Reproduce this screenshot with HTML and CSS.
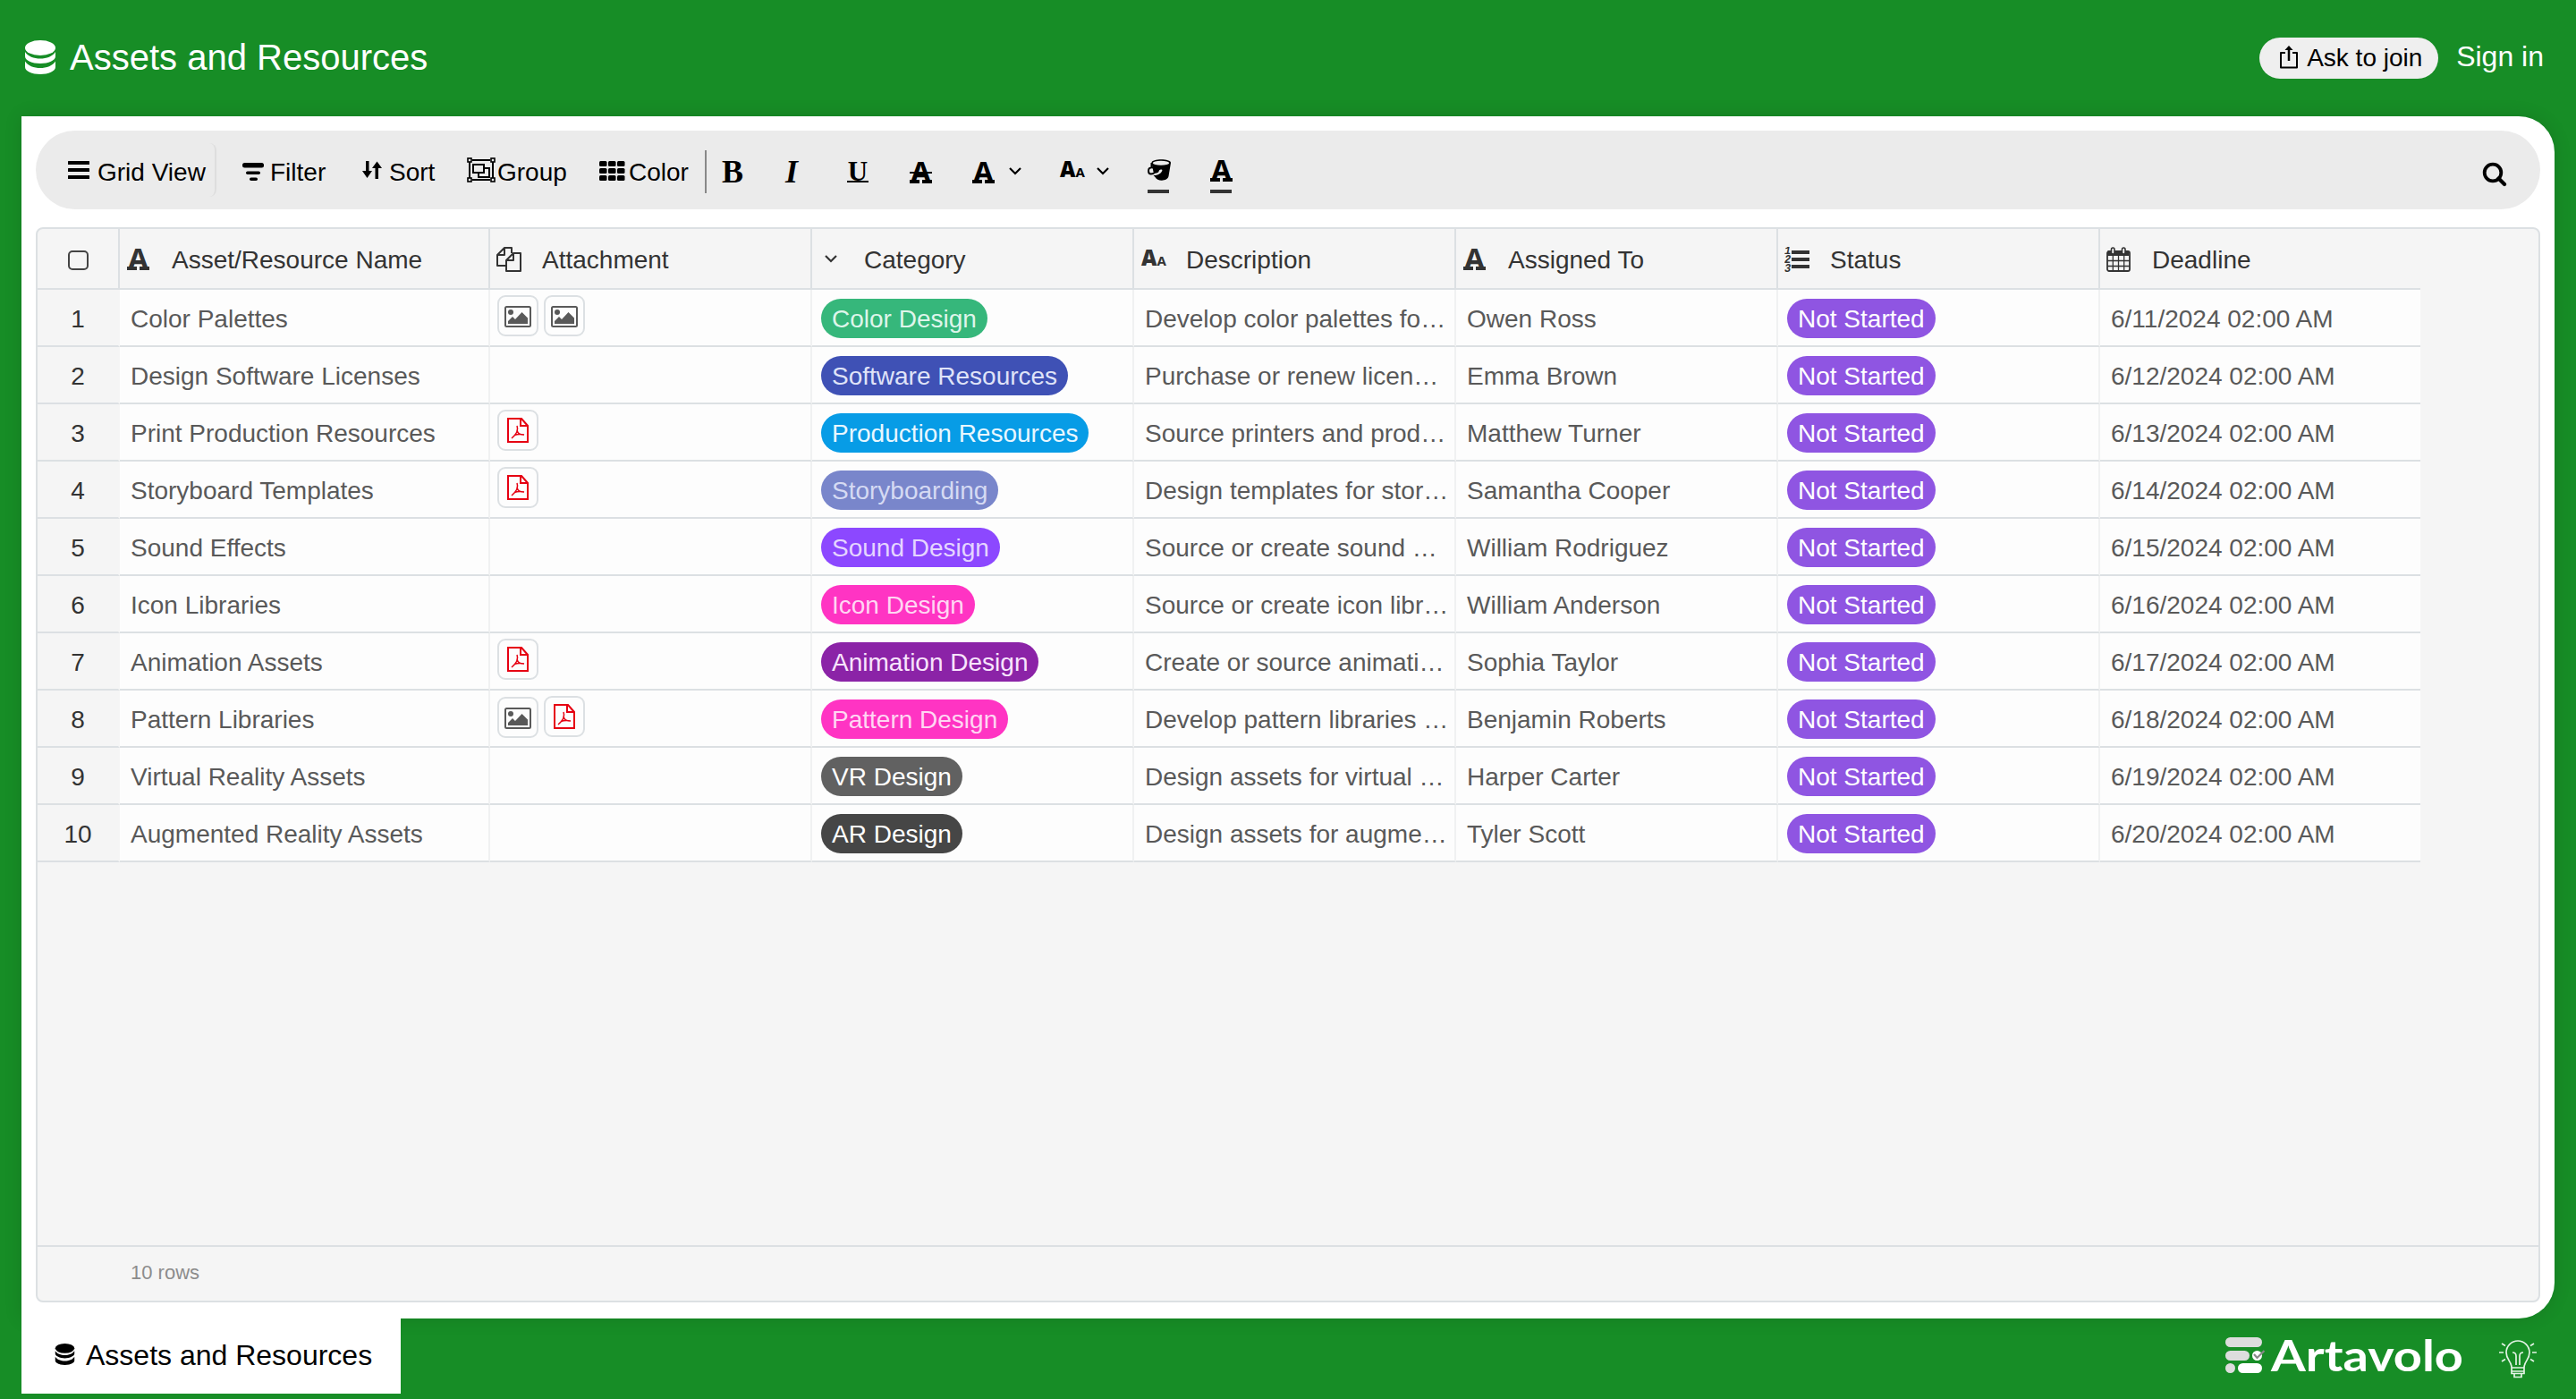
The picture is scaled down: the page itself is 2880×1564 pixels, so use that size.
FILE: index.html
```html
<!DOCTYPE html>
<html lang="en">
<head>
    <meta charset="UTF-8">
    <meta name="viewport" content="width=device-width, initial-scale=1.0">
    <title>Assets and Resources</title>
    <link rel="stylesheet" href="styles.css">
</head>
<body>

    <!-- shared icons -->
    <svg class="icon-defs" width="0" height="0">
        <symbol id="i-database" viewBox="0 0 34 38">
            <ellipse cx="17" cy="8.5" rx="17" ry="8.5"/>
            <path d="M0 13c3 5 10 7.500 17 7.500s14-2.500 17-7.500v5c0 4.500-8 8-17 8s-17-3.500-17-8z"/>
            <path d="M0 23.500c3 5 10 7.500 17 7.500s14-2.500 17-7.500v6.500c0 4.500-8 8-17 8s-17-3.500-17-8z"/>
        </symbol>
        <symbol id="i-chevron" viewBox="0 0 14 9">
            <path d="M1 1l6 6 6-6" fill="none" stroke="currentColor" stroke-width="2.2"/>
        </symbol>
        <symbol id="i-image" viewBox="0 0 30 24">
            <rect x="1" y="1" width="28" height="22" rx="1.500" fill="none" stroke="currentColor" stroke-width="2"/>
            <circle cx="7" cy="7" r="3"/>
            <path d="M4 20v-3l5-5 3 3 7.500-8 6.500 6.500v6.500z"/>
        </symbol>
        <symbol id="i-pdf" viewBox="0 0 24 28">
            <path d="M1 1h15l7 8v18h-22z M15 1v8h8" fill="none" stroke="currentColor" stroke-width="2"/>
            <path d="M11 9c2 5 0 9-6 14M11 14c1 4 3 5 8 5M8 19.500c4-1.500 7-1.500 11-.5" fill="none" stroke="currentColor" stroke-width="1.500"/>
        </symbol>
    </svg>

    <header class="header">
        <div class="title">
            <svg class="title-icon"><use href="#i-database"/></svg>
            <span>Assets and Resources</span>
        </div>
        <div class="header-actions">
            <button class="join">
                <svg width="20" height="26" viewBox="0 0 20 26">
                    <path d="M6 8h-5v16.500h18v-16.500h-5" fill="none" stroke="#000" stroke-width="2" stroke-linejoin="round"/>
                    <path d="M10 17v-13" stroke="#000" stroke-width="2.500"/>
                    <path d="M5.500 5l4.500-5 4.500 5z"/>
                </svg>
                <span>Ask to join</span>
            </button>
            <a class="signin">Sign in</a>
        </div>
    </header>

    <main class="panel">
        <div class="toolbar">
            <div class="tool view">
                <svg width="24" height="20" viewBox="0 0 24 20">
                    <rect width="24" height="4" rx=".5"/><rect y="8" width="24" height="4" rx=".5"/><rect y="16" width="24" height="4" rx=".5"/>
                </svg>
                <span>Grid View</span>
            </div>
            <div class="tool filter">
                <svg width="24" height="20" viewBox="0 0 24 20">
                    <rect width="24" height="5.500" rx="2.500"/><rect x="4" y="9.500" width="16" height="3.500" rx="1.700"/><rect x="8" y="16.500" width="9" height="3.500" rx="1.700"/>
                </svg>
                <span>Filter</span>
            </div>
            <div class="tool sort">
                <svg width="22" height="20" viewBox="0 0 22 20">
                    <path d="M4 0h3.500v11h3.500l-5.500 8-5.500-8h4z M14.500 20h3.500v-12h4l-5.500-7.500-5.500 7.500h3.500z"/>
                </svg>
                <span>Sort</span>
            </div>
            <div class="tool group">
                <svg width="32" height="28" viewBox="0 0 32 28" fill="none" stroke="#000" stroke-width="2">
                    <path d="M6 3h20M6 25h20M3 5v18M29 5v18M7 8h12v9h-12z M20 12h5v10h-12v-4"/>
                    <g stroke-width="1.600">
                        <rect x="1" y="1" width="4" height="4"/><rect x="27" y="1" width="4" height="4"/>
                        <rect x="1" y="23" width="4" height="4"/><rect x="27" y="23" width="4" height="4"/>
                    </g>
                </svg>
                <span>Group</span>
            </div>
            <div class="tool color">
                <svg width="29" height="22" viewBox="0 0 29 22">
                    <rect width="8.500" height="6" rx="1.500"/><rect x="10" width="8.500" height="6" rx="1.500"/><rect x="20" width="8.500" height="6" rx="1.500"/>
                    <rect y="8" width="8.500" height="6" rx="1.500"/><rect x="10" y="8" width="8.500" height="6" rx="1.500"/><rect x="20" y="8" width="8.500" height="6" rx="1.500"/>
                    <rect y="16" width="8.500" height="6" rx="1.500"/><rect x="10" y="16" width="8.500" height="6" rx="1.500"/><rect x="20" y="16" width="8.500" height="6" rx="1.500"/>
                </svg>
                <span>Color</span>
            </div>
            <div class="separator"></div>
            <div class="formats">
                <span class="fmt bold">B</span>
                <span class="fmt italic">I</span>
                <span class="fmt underline">U</span>
                <span class="fmt letter"><span class="slab strike">A</span></span>
                <span class="fmt letter"><span class="slab">A</span></span>
                <svg class="chevron first"><use href="#i-chevron"/></svg>
                <span class="letters"><b>A</b><small>A</small></span>
                <svg class="chevron second"><use href="#i-chevron"/></svg>
                <span class="fmt swatch">
                    <svg width="26" height="24" viewBox="0 0 26 24">
                        <path d="M4.500 4v5M9 14c-3 3-8 4-8-1 0-3 2-4 5-3.500" fill="none" stroke="#000" stroke-width="2"/>
                        <path d="M4.500 4c0-5 21.500-5 21.500 0l-2.500 15c-1 6-13 6-15 1l-2-2c5 0 9-2 10-6-2-1-4 0-4 2-2 2-5 2-6 0z"/>
                        <ellipse cx="15" cy="4.300" rx="9.200" ry="2.500" fill="#ebebeb"/>
                    </svg>
                </span>
                <span class="fmt swatch"><span class="slab">A</span></span>
            </div>
            <svg class="search" width="28" height="28" viewBox="0 0 28 28" fill="none" stroke="#000">
                <circle cx="12" cy="12" r="9.300" stroke-width="3.800"/>
                <path d="M18.500 18.500l6.500 6.500" stroke-width="4.200" stroke-linecap="round"/>
            </svg>
        </div>

        <section class="grid">
            <table>
                <colgroup>
                    <col class="col-num"><col class="col-name"><col><col><col><col><col><col class="col-last">
                </colgroup>
                <thead>
                    <tr>
                        <th><span class="checkbox"></span></th>
                        <th><div class="head"><i><span class="slab">A</span></i>Asset/Resource Name</div></th>
                        <th><div class="head"><i class="tight">
                            <svg width="28" height="28" viewBox="0 0 28 28" fill="none" stroke="currentColor" stroke-width="2" stroke-linejoin="round">
                                <path d="M11 21h-10v-12l8-8h8v6M1 9h8v-8M11 15v12h16v-20h-8zM11 15h8v-8"/>
                            </svg></i>Attachment</div></th>
                        <th><div class="head"><i class="wide"><svg class="chevron"><use href="#i-chevron"/></svg></i>Category</div></th>
                        <th><div class="head"><i><span class="letters"><b>A</b><small>A</small></span></i>Description</div></th>
                        <th><div class="head"><i><span class="slab">A</span></i>Assigned To</div></th>
                        <th><div class="head"><i class="tight">
                            <svg width="28" height="28" viewBox="0 0 28 28">
                                <g class="list-digits"><text x="0" y="8">1</text><text x="0" y="18">2</text><text x="0" y="28">3</text></g>
                                <rect x="8" y="4" width="20" height="4"/><rect x="8" y="12" width="20" height="4"/><rect x="8" y="20" width="20" height="4"/>
                            </svg></i>Status</div></th>
                        <th><div class="head"><i class="tight">
                            <svg width="27" height="28" viewBox="0 0 27 28">
                                <path d="M1 10v-4q0-2 2-2h20q2 0 2 2v4z"/>
                                <rect x="1" y="5" width="25" height="22" rx="2" fill="none" stroke="currentColor" stroke-width="1.800"/>
                                <path d="M1 15.500h25M1 21.500h25M7.300 10v17M13.500 10v17M19.700 10v17" stroke="currentColor" stroke-width="1.300"/>
                                <rect x="5.500" y="1" width="3.500" height="7" rx="1.700" fill="#f5f5f5" stroke="currentColor" stroke-width="1.600"/>
                                <rect x="17.500" y="1" width="3.500" height="7" rx="1.700" fill="#f5f5f5" stroke="currentColor" stroke-width="1.600"/>
                            </svg></i>Deadline</div></th>
                    </tr>
                </thead>
                <tbody>
                    <tr>
                        <td>1</td><td>Color Palettes</td>
                        <td class="files"><span class="file"><svg class="image"><use href="#i-image"/></svg></span><span class="file"><svg class="image"><use href="#i-image"/></svg></span></td>
                        <td class="tags"><span class="tag green">Color Design</span></td>
                        <td>Develop color palettes fo…</td><td>Owen Ross</td>
                        <td class="tags"><span class="tag status">Not Started</span></td><td>6/11/2024 02:00 AM</td>
                    </tr>
                    <tr>
                        <td>2</td><td>Design Software Licenses</td>
                        <td class="files"></td>
                        <td class="tags"><span class="tag indigo">Software Resources</span></td>
                        <td>Purchase or renew licen…</td><td>Emma Brown</td>
                        <td class="tags"><span class="tag status">Not Started</span></td><td>6/12/2024 02:00 AM</td>
                    </tr>
                    <tr>
                        <td>3</td><td>Print Production Resources</td>
                        <td class="files"><span class="file"><svg class="pdf"><use href="#i-pdf"/></svg></span></td>
                        <td class="tags"><span class="tag blue">Production Resources</span></td>
                        <td>Source printers and prod…</td><td>Matthew Turner</td>
                        <td class="tags"><span class="tag status">Not Started</span></td><td>6/13/2024 02:00 AM</td>
                    </tr>
                    <tr>
                        <td>4</td><td>Storyboard Templates</td>
                        <td class="files"><span class="file"><svg class="pdf"><use href="#i-pdf"/></svg></span></td>
                        <td class="tags"><span class="tag slate">Storyboarding</span></td>
                        <td>Design templates for stor…</td><td>Samantha Cooper</td>
                        <td class="tags"><span class="tag status">Not Started</span></td><td>6/14/2024 02:00 AM</td>
                    </tr>
                    <tr>
                        <td>5</td><td>Sound Effects</td>
                        <td class="files"></td>
                        <td class="tags"><span class="tag violet">Sound Design</span></td>
                        <td>Source or create sound …</td><td>William Rodriguez</td>
                        <td class="tags"><span class="tag status">Not Started</span></td><td>6/15/2024 02:00 AM</td>
                    </tr>
                    <tr>
                        <td>6</td><td>Icon Libraries</td>
                        <td class="files"></td>
                        <td class="tags"><span class="tag pink">Icon Design</span></td>
                        <td>Source or create icon libr…</td><td>William Anderson</td>
                        <td class="tags"><span class="tag status">Not Started</span></td><td>6/16/2024 02:00 AM</td>
                    </tr>
                    <tr>
                        <td>7</td><td>Animation Assets</td>
                        <td class="files"><span class="file"><svg class="pdf"><use href="#i-pdf"/></svg></span></td>
                        <td class="tags"><span class="tag purple">Animation Design</span></td>
                        <td>Create or source animati…</td><td>Sophia Taylor</td>
                        <td class="tags"><span class="tag status">Not Started</span></td><td>6/17/2024 02:00 AM</td>
                    </tr>
                    <tr>
                        <td>8</td><td>Pattern Libraries</td>
                        <td class="files"><span class="file"><svg class="image"><use href="#i-image"/></svg></span><span class="file"><svg class="pdf"><use href="#i-pdf"/></svg></span></td>
                        <td class="tags"><span class="tag pink">Pattern Design</span></td>
                        <td>Develop pattern libraries …</td><td>Benjamin Roberts</td>
                        <td class="tags"><span class="tag status">Not Started</span></td><td>6/18/2024 02:00 AM</td>
                    </tr>
                    <tr>
                        <td>9</td><td>Virtual Reality Assets</td>
                        <td class="files"></td>
                        <td class="tags"><span class="tag gray">VR Design</span></td>
                        <td>Design assets for virtual …</td><td>Harper Carter</td>
                        <td class="tags"><span class="tag status">Not Started</span></td><td>6/19/2024 02:00 AM</td>
                    </tr>
                    <tr>
                        <td>10</td><td>Augmented Reality Assets</td>
                        <td class="files"></td>
                        <td class="tags"><span class="tag dark">AR Design</span></td>
                        <td>Design assets for augme…</td><td>Tyler Scott</td>
                        <td class="tags"><span class="tag status">Not Started</span></td><td>6/20/2024 02:00 AM</td>
                    </tr>
                </tbody>
            </table>
            <div class="row-count">10 rows</div>
        </section>
    </main>

    <footer class="footer">
        <div class="tab">
            <svg class="tab-icon"><use href="#i-database"/></svg>
            <span>Assets and Resources</span>
        </div>
        <div class="brand">
            <svg width="268" height="60" viewBox="0 -6 268 60">
                <g fill="#ddd">
                    <rect y="3" width="41" height="11" rx="5.500"/>
                    <rect y="18" width="27" height="11" rx="5.500"/>
                    <circle cx="5.500" cy="37.500" r="5.500"/>
                </g>
                <g fill="#fff">
                    <circle cx="35.500" cy="23.500" r="5.500"/>
                    <rect x="14" y="32" width="27" height="11" rx="5.500"/>
                </g>
                <path d="M32 22l3.500 4 8-8" fill="none" stroke="#888" stroke-width="2.200"/>
                <text class="brand-name" x="51" y="41" textLength="215" lengthAdjust="spacingAndGlyphs">Artavolo</text>
            </svg>
            <svg class="bulb" width="42" height="43" viewBox="0 0 42 43" fill="none" stroke="#e3f3e5" stroke-width="1.700">
                <path d="M14 31c0-7-6-9-6-17a13 13 0 0 1 26 0c0 8-6 10-6 17zM14 35h14M14 31v6.500h14v-6.500M17 38v3.500h8v-3.500"/>
                <path d="M15 14q4 0 4 4v10M27 14q-4 0-4 4v10M0 14h5M37 14h5M3 4l4 2.500M39 4l-4 2.500M3 24l4-2.500M39 24l-4-2.500"/>
            </svg>
        </div>
    </footer>

</body>
</html>
```

FILE: styles.css
```css
* {
    box-sizing: border-box;
}
body {
    margin: 0;
    height: 1564px;
    display: flex;
    flex-direction: column;
    background-color: #178d26;
    font-family: "Liberation Sans", Arial, sans-serif;
    font-size: 28px;
    color: #000;
    overflow: hidden;
}
svg {
    flex: none;
    display: block;
}
.icon-defs {
    position: absolute;
}

/* header */
.header {
    height: 130px;
    flex: none;
    display: flex;
    justify-content: space-between;
    color: #fff;
}
.title {
    display: flex;
    align-items: center;
    gap: 16px;
    height: 128px;
    padding-left: 28px;
    font-size: 40px;
}
.title-icon {
    width: 34px;
    height: 38px;
    fill: #fff;
}
.header-actions {
    display: flex;
    align-items: center;
    height: 130px;
    padding-right: 36px;
}
.join {
    display: flex;
    align-items: center;
    gap: 10px;
    width: 200px;
    height: 46px;
    padding: 0 0 0 23px;
    border: none;
    border-radius: 23px;
    background-color: #efefef;
    color: #000;
    font: inherit;
}
.join svg {
    margin-bottom: 2px;
}
.signin {
    margin-left: 20px;
    padding-bottom: 4px;
    font-size: 32px;
}

/* white panel */
.panel {
    width: 2832px;
    height: 1344px;
    flex: none;
    margin-left: 24px;
    padding: 16px 16px 18px;
    display: flex;
    flex-direction: column;
    gap: 20px;
    background-color: #fff;
    border-radius: 0 40px 40px 0;
    box-shadow: 0 0 20px rgba(0, 0, 0, 0.12);
}

/* toolbar */
.toolbar {
    height: 88px;
    flex: none;
    display: flex;
    align-items: center;
    padding: 0 37px 0 32px;
    background-color: #ebebeb;
    border-radius: 44px;
}
.tool {
    display: flex;
    align-items: center;
    height: 60px;
    white-space: nowrap;
}
.tool span {
    padding-top: 5px;
}
.view {
    width: 170px;
    padding-left: 4px;
    gap: 9px;
    border-right: 2px solid #dedede;
    border-radius: 8px;
}
.filter {
    width: 93px;
    margin-left: 29px;
    gap: 7px;
}
.filter svg {
    margin-top: 3px;
}
.sort {
    width: 82px;
    margin-left: 41px;
    gap: 8px;
}
.group {
    width: 112px;
    margin-left: 35px;
    gap: 2px;
}
.color {
    width: 100px;
    margin-left: 36px;
    gap: 4px;
}
.color svg {
    margin-top: 2px;
}
.separator {
    width: 2px;
    height: 48px;
    margin: 4px 17px 0 18px;
    background-color: #888;
}
.formats {
    display: flex;
    align-items: center;
}
.fmt {
    width: 24px;
    height: 48px;
    margin-right: 46px;
    font-family: "Liberation Serif", serif;
    font-size: 36px;
    line-height: 52px;
    text-align: center;
}
.bold, .italic {
    font-weight: bold;
}
.italic {
    font-style: italic;
    text-align: left;
    text-indent: 1px;
}
.underline {
    height: 24px;
    line-height: 24px;
    font-size: 31px;
    font-weight: bold;
    border-bottom: 2px solid #000;
    margin-top: 4px;
}
.letter {
    height: 24px;
    margin-top: 4px;
}
/* bold letter standing on two feet */
.slab {
    display: block;
    width: 25px;
    height: 25px;
    font-family: "Noto Sans", sans-serif;
    font-weight: bold;
    font-style: normal;
    font-size: 33px;
    line-height: 23px;
    text-align: center;
    background: linear-gradient(currentColor, currentColor) left bottom / 11px 4px no-repeat,
        linear-gradient(currentColor, currentColor) right bottom / 11px 4px no-repeat;
}
.strike {
    background: linear-gradient(currentColor, currentColor) left bottom / 11px 4px no-repeat,
        linear-gradient(currentColor, currentColor) right bottom / 11px 4px no-repeat,
        linear-gradient(currentColor, currentColor) left 12px / 25px 2px no-repeat;
}
.chevron {
    width: 14px;
    height: 9px;
}
.first {
    margin: 2px 43px 0 -29px;
}
.second {
    margin: 2px 43px 0 13px;
}
.letters {
    display: flex;
    align-items: baseline;
    width: 28px;
    font-family: "Noto Sans", sans-serif;
    font-weight: bold;
    font-style: normal;
    line-height: 34px;
}
.letters b {
    font-size: 24px;
}
.letters small {
    font-size: 15px;
}
.swatch {
    height: 38px;
    margin-top: 14px;
    border-bottom: 4px solid #333;
}
.search {
    margin-left: auto;
    margin-top: 10px;
}

/* data grid */
.grid {
    flex: 1;
    display: flex;
    flex-direction: column;
    justify-content: space-between;
    background-color: #f5f5f5;
    border: 2px solid #dce0e3;
    border-radius: 8px;
    overflow: hidden;
}
table {
    width: 2664px;
    table-layout: fixed;
    border-spacing: 0;
}
.col-num {
    width: 92px;
}
.col-name {
    width: 414px;
}
.col-last {
    width: 358px;
}
th, td {
    padding: 3px 0 0 12px;
    border-right: 2px solid #f0f1f2;
    border-bottom: 2px solid #dce0e3;
    text-align: left;
    white-space: nowrap;
    line-height: 45px;
}
th {
    height: 68px;
    padding-left: 0;
    border-right-color: #dce0e3;
    color: #333;
    fill: #333;
    font-weight: normal;
}
td {
    height: 64px;
    background-color: #fdfdfd;
    color: #595959;
}
th:last-child, td:last-child {
    border-right: none;
}
td:first-child {
    padding-left: 0;
    background-color: #f5f5f5;
    border-right-color: #f5f5f5;
    color: #333;
    text-align: center;
}
.checkbox {
    display: block;
    width: 23px;
    height: 22px;
    margin: 0 auto;
    border: 2px solid #444;
    border-radius: 5px;
}
.head {
    display: flex;
    align-items: center;
}
.head i {
    width: 58px;
    height: 44px;
    padding: 0 0 2px 8px;
    display: flex;
    align-items: center;
    flex: none;
}
.head i.tight {
    padding-left: 7px;
}
.head i.wide {
    padding-left: 14px;
}
.list-digits {
    font-family: "Liberation Mono", monospace;
    font-size: 12px;
    font-weight: bold;
}
.files {
    padding: 6px 0 0 8px;
    vertical-align: top;
    font-size: 0;
    line-height: 0;
}
.file {
    display: inline-flex;
    align-items: center;
    justify-content: center;
    width: 46px;
    height: 46px;
    margin-right: 6px;
    border: 2px solid #dce0e3;
    border-radius: 9px;
}
.image {
    width: 30px;
    height: 24px;
    margin-top: 2px;
    color: #595959;
    fill: #595959;
}
.pdf {
    width: 24px;
    height: 28px;
    color: #e60012;
}
.tags {
    padding: 10px 0 0 10px;
    vertical-align: top;
}
.tag {
    display: inline-block;
    vertical-align: top;
    height: 44px;
    padding: 1px 12px 0;
    border-radius: 22px;
    color: #fff;
    line-height: 44px;
}
.green {
    background-color: #36b77b;
    color: #def5ea;
}
.indigo {
    background-color: #3f51b5;
    color: #dfe3f8;
}
.blue {
    background-color: #079ce6;
    color: #e8f7ff;
}
.slate {
    background-color: #7986cb;
    color: #d5daf3;
}
.violet {
    background-color: #8c48ff;
    color: #e5d5ff;
}
.pink {
    background-color: #ff34c3;
    color: #ffd6f3;
}
.purple {
    background-color: #8b23a7;
    color: #f8e4fd;
}
.gray {
    background-color: #616161;
}
.dark {
    background-color: #464646;
}
.status {
    background-color: #8f55e2;
}
.row-count {
    height: 62px;
    padding-left: 104px;
    border-top: 2px solid #dce0e3;
    color: #8c8c8c;
    font-size: 22px;
    line-height: 57px;
}

/* bottom bar */
.footer {
    display: flex;
    justify-content: space-between;
    z-index: 1;
}
.tab {
    display: flex;
    align-items: center;
    gap: 12px;
    width: 424px;
    height: 84px;
    margin-left: 24px;
    padding: 0 0 2px 37px;
    background-color: #fff;
    font-size: 32px;
}
.tab-icon {
    width: 23px;
    height: 24px;
    margin-bottom: 2px;
}
.brand {
    display: flex;
    align-items: center;
    gap: 38px;
    height: 84px;
    padding-right: 44px;
}
.brand-name {
    fill: #fff;
    font-family: Lato, sans-serif;
    font-size: 48px;
    font-weight: bold;
}
.bulb {
    margin-top: 6px;
}
```
